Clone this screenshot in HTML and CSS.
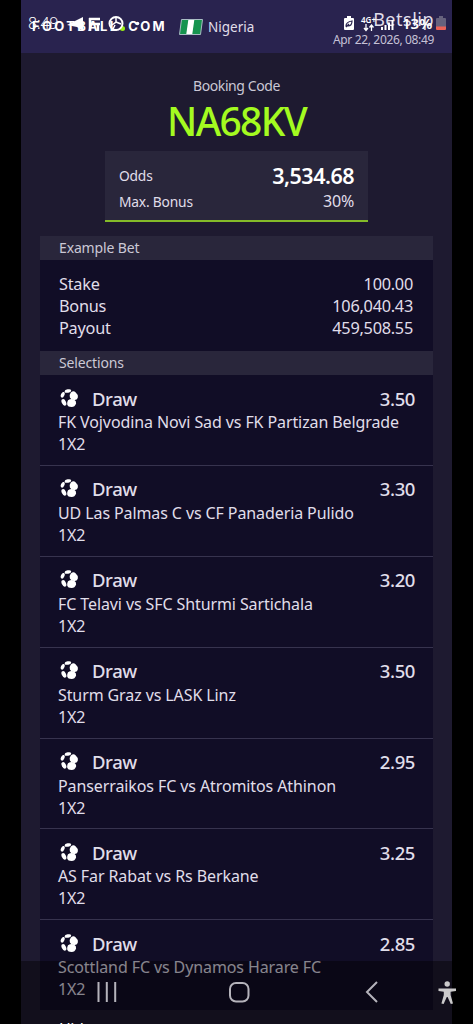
FILE: index.html
```html
<!DOCTYPE html>
<html lang="en">
<head>
<meta charset="utf-8">
<title>Betslip</title>
<link rel="stylesheet" href="styles.css">
</head>
<body>
<svg width="0" height="0" class="defs">
  <symbol id="ball" viewBox="0 0 18 19">
    <g fill="#fff">
      <ellipse cx="7.900" cy="2" rx="3.300" ry="1.700" transform="rotate(-12 7.900 2)"/>
      <ellipse cx="2.700" cy="5.800" rx="1.700" ry="3" transform="rotate(24 2.700 5.800)"/>
      <path d="M10.800 3.500q2.600-2.100 4.700-.3 2.500 2 2.400 5-.4 2.500-3 2.700-4 .4-5-2.300-.6-3.400.9-5.100z"/>
      <path d="M8 11.300q2.900-2 6-.9 2.600 1.500 2.100 4.100-1.300 3.500-4.400 3.600-3.900 0-4.500-2.500-.3-2.700.8-4.300z"/>
      <ellipse cx="3.900" cy="13.300" rx="2.100" ry="3.500" transform="rotate(-26 3.900 13.300)"/>
    </g>
  </symbol>
</svg>
<div class="phone">
  <header class="topbar">
    <div class="brand">FOOTBALL<i class="dot"></i>COM</div>
    <svg class="flag" width="24" height="16" viewBox="0 0 24 16"><path d="M2.500 .5h21l-2 15h-21z" fill="#16934f" stroke="#a9bdc4"/><path d="M9.300 1h6l-2 14h-6z" fill="#fff"/></svg>
    <span class="country">Nigeria</span>
    <div class="heading">
      <span class="title">Betslip</span>
      <span class="date">Apr 22, 2026, 08:49</span>
    </div>
  </header>
  <main>
    <p class="label">Booking Code</p>
    <h1 class="code">NA68KV</h1>
    <section class="odds">
      <div class="line"><span>Odds</span><b class="total">3,534.68</b></div>
      <div class="line"><span>Max. Bonus</span><span class="pct">30%</span></div>
    </section>
    <section class="slip">
      <h2 class="bar">Example Bet</h2>
      <div class="example">
        <div class="line"><span>Stake</span><span>100.00</span></div>
        <div class="line"><span>Bonus</span><span>106,040.43</span></div>
        <div class="line"><span>Payout</span><span>459,508.55</span></div>
      </div>
      <h2 class="bar">Selections</h2>
      <article class="pick"><div class="pick-head"><svg class="ball"><use href="#ball"/></svg><b>Draw</b><b class="price">3.50</b></div><p>FK Vojvodina Novi Sad vs FK Partizan Belgrade</p><p>1X2</p></article>
      <article class="pick"><div class="pick-head"><svg class="ball"><use href="#ball"/></svg><b>Draw</b><b class="price">3.30</b></div><p>UD Las Palmas C vs CF Panaderia Pulido</p><p>1X2</p></article>
      <article class="pick"><div class="pick-head"><svg class="ball"><use href="#ball"/></svg><b>Draw</b><b class="price">3.20</b></div><p>FC Telavi vs SFC Shturmi Sartichala</p><p>1X2</p></article>
      <article class="pick"><div class="pick-head"><svg class="ball"><use href="#ball"/></svg><b>Draw</b><b class="price">3.50</b></div><p>Sturm Graz vs LASK Linz</p><p>1X2</p></article>
      <article class="pick"><div class="pick-head"><svg class="ball"><use href="#ball"/></svg><b>Draw</b><b class="price">2.95</b></div><p>Panserraikos FC vs Atromitos Athinon</p><p>1X2</p></article>
      <article class="pick"><div class="pick-head"><svg class="ball"><use href="#ball"/></svg><b>Draw</b><b class="price">3.25</b></div><p>AS Far Rabat vs Rs Berkane</p><p>1X2</p></article>
      <article class="pick"><div class="pick-head"><svg class="ball"><use href="#ball"/></svg><b>Draw</b><b class="price">2.85</b></div><p>Scottland FC vs Dynamos Harare FC</p><p>1X2</p></article>
    </section>
    <p class="more">Hide</p>
  </main>
</div>
<div class="status">
  <span class="clock">8:49</span>
  <svg class="apps" width="90" height="22" viewBox="0 0 90 22">
    <path d="M0 12L16 4v14l-6-4z" fill="#fff"/>
    <path d="M22 6h11M22 11h11M23 5v13M31 10v8" stroke="#fff" stroke-width="2.500" fill="none"/>
    <circle cx="49" cy="10.500" r="6.500" fill="none" stroke="#fff" stroke-width="2"/><path d="M49 4v5l-4 3M49 9l5 2M46 16l2-4" fill="none" stroke="#fff" stroke-width="1.500"/>
    <circle cx="70.500" cy="10.500" r="1.800" fill="#fff"/>
  </svg>
  <svg class="saver" width="10" height="15" viewBox="0 0 10 15"><path d="M3 0h4v2h2q1 0 1 1v10q0 1-1 1H1q-1 0-1-1V3q0-1 1-1h2z" fill="#fff"/><path d="M2 10q0-4 6-5-0 5-4 5zM2 11l3-3" stroke="#29234f" fill="none" stroke-width="1.200"/></svg>
  <span class="net">4G+</span>
  <svg class="arrows" width="12" height="8" viewBox="0 0 12 8"><path d="M3 0v6M1 4l2 2.500L5 4M8.500 7V1M6.500 3.500l2-2.500 2 2.500" stroke="#fff" stroke-width="1.300" fill="none"/></svg>
  <svg class="signal" width="13" height="10" viewBox="0 0 13 10"><path d="M1 10V7M4.500 10V5M8 10V2.500M11.500 10V0" stroke="#fff" stroke-width="2"/></svg>
  <span class="level">13%</span>
  <svg class="battery" width="10" height="15" viewBox="0 0 10 15"><path d="M3 0h4v2h2q1 0 1 1v8H0V3q0-1 1-1h2z" fill="#66627d"/><path d="M0 10.500h10V13q0 1-1 1H1q-1 0-1-1z" fill="#ed6257"/></svg>
</div>
<nav class="sysnav">
  <svg width="452" height="63" viewBox="0 0 452 63" fill="none" stroke="#b5b3bb" stroke-width="2">
    <path d="M77.500 21v20M85.800 21v20M94.200 21v20"/>
    <rect x="209" y="22" width="18.500" height="18.500" rx="6"/>
    <path d="M356 21l-10 10 10 10"/>
    <g fill="#cbcacb" stroke="none"><circle cx="426.200" cy="23" r="2.700"/><path d="M417.500 27.500h17.500v2.400l-5.400.8v3.300l2.400 8.500-2.200.6-3.200-7h-.8l-3.200 7-2.200-.6 2.400-8.500v-3.300l-5.300-.8z"/></g>
  </svg>
</nav>
</body>
</html>
```
FILE: styles.css
```css
* { box-sizing: border-box; margin: 0; padding: 0; }
body { position: relative; width: 473px; height: 1024px; overflow: hidden; background: #000; color: #e0deea; font-family: "Noto Sans", sans-serif; }
.defs { display: block; }
.phone { width: 431px; height: 1024px; margin-left: 21px; overflow: hidden; background: #1e1a30; }
.topbar { display: flex; height: 53px; padding-left: 11px; background: #29234f; }
.brand { display: flex; align-items: center; width: 147px; height: 53px; color: #fff; font: 700 13px/53px Inter, sans-serif; letter-spacing: 2.300px; }
.dot { width: 5px; height: 5px; margin: 4px 3px 0 1px; border-radius: 50%; background: #9bef16; }
.flag { margin-top: 19px; }
.country { margin: 17px 0 0 5px; font-size: 13.500px; line-height: 20px; }
.heading { display: flex; flex-direction: column; align-items: flex-end; margin-left: auto; padding: 9px 18px 0 0; }
.title { font-size: 18px; line-height: 20px; letter-spacing: .5px; }
.date { margin-top: 2px; font-size: 12px; line-height: 18px; letter-spacing: -.35px; color: #c5c1d6; }
.label { padding-top: 23px; text-align: center; font-size: 14px; line-height: 20px; letter-spacing: -.4px; color: #cbc8d5; }
.code { margin-top: 1px; text-align: center; color: #a4fb20; font-size: 39px; font-weight: 500; line-height: 48px; letter-spacing: -1.700px; }
.odds { width: 263px; height: 71px; margin: 6px auto 0 84px; padding: 11px 14px 0; border-bottom: 2px solid #84bb29; background: #29263b; }
.line { display: flex; justify-content: space-between; align-items: center; }
.odds .line { height: 26px; font-size: 13.800px; letter-spacing: -.2px; }
.odds .total { color: #fff; font-size: 21.500px; font-weight: 600; letter-spacing: -.5px; }
.odds .pct { font-size: 16px; }
.slip { width: 393px; margin: 14px 0 0 19px; background: #110d26; }
.bar { height: 24px; padding-left: 19px; background: #29263b; color: #cbc8d5; font-size: 14px; font-weight: 400; line-height: 24px; letter-spacing: -.15px; }
.example { height: 91px; padding: 13px 20px 0 19px; font-size: 16.300px; letter-spacing: -.25px; }
.example .line { height: 22.200px; }
.pick { height: 90.900px; padding: 10px 18px 0; border-bottom: 1px solid #37334e; }
.pick:last-child { height: 90px; border-bottom: 0; }
.pick-head { display: flex; align-items: center; height: 26px; font-size: 18.500px; letter-spacing: -.4px; }
.pick-head b { font-weight: 500; }
.ball { width: 18px; height: 19px; margin: 0 14px 0 2px; }
.pick-head .price { margin-left: auto; }
.pick p { font-size: 16px; line-height: 22px; letter-spacing: -.1px; white-space: nowrap; }
.more { position: relative; z-index: 2; margin: 8px 0 0 38px; color: #fff; font-size: 16px; line-height: 22px; letter-spacing: -.5px; }
.status { position: absolute; inset: 0 0 auto; height: 53px; color: #fff; }
.status > * { position: absolute; }
.clock { left: 28px; top: 13px; font-size: 16px; font-weight: 300; line-height: 20px; letter-spacing: -.3px; }
.apps { left: 67px; top: 13px; }
.saver { left: 344px; top: 16px; }
.net { left: 361px; top: 14px; font-size: 8px; font-weight: 600; line-height: 11px; }
.arrows { left: 363px; top: 24px; }
.signal { left: 381px; top: 20px; }
.level { left: 402px; top: 13px; font-size: 15px; font-weight: 600; line-height: 20px; }
.battery { left: 436px; top: 16px; }
.sysnav { position: absolute; left: 21px; top: 961px; width: 452px; height: 63px; background: rgba(0, 0, 0, .4); }
.sysnav svg { display: block; }
```
